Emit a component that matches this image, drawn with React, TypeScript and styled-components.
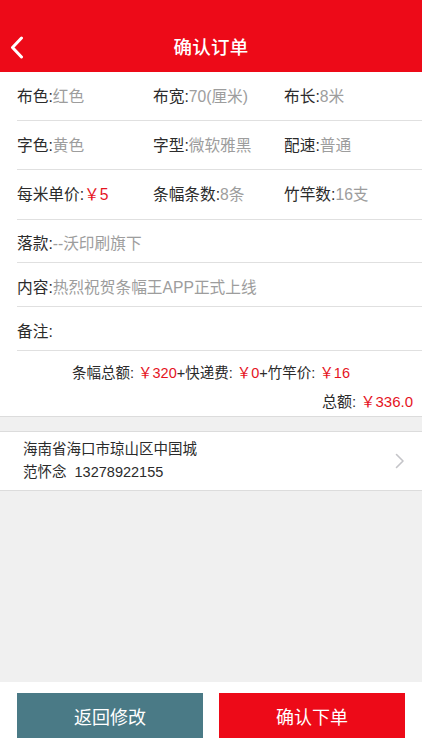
import React from "react";
import styled, { createGlobalStyle } from "styled-components";

const FONT = `"Liberation Sans", "Noto Sans CJK SC", "Noto Sans", sans-serif`;

const GlobalStyle = createGlobalStyle`
  html, body {
    margin: 0;
    padding: 0;
    background: #f0f0f0;
  }
  body {
    font-family: ${FONT};
    -webkit-font-smoothing: antialiased;
  }
`;

const RED = "#ed0a18";
const PRICE_RED = "#e5141e";

const SPEC_ROWS: { label: string; value: string; price?: boolean }[][] = [
  [
    { label: "布色", value: "红色" },
    { label: "布宽", value: "70(厘米)" },
    { label: "布长", value: "8米" },
  ],
  [
    { label: "字色", value: "黄色" },
    { label: "字型", value: "微软雅黑" },
    { label: "配速", value: "普通" },
  ],
  [
    { label: "每米单价", value: "￥5", price: true },
    { label: "条幅条数", value: "8条" },
    { label: "竹竿数", value: "16支" },
  ],
];

const LINE_ROWS = [
  { label: "落款", value: "--沃印刷旗下", height: 43 },
  { label: "内容", value: "热烈祝贺条幅王APP正式上线", height: 44 },
  { label: "备注", value: "", height: 44 },
];

export default function App() {
  return (
    <>
      <GlobalStyle />
      <Page>
        <Header>
          <BackButton aria-label="返回">
            <svg width="14" height="23" viewBox="0 0 14 23">
              <path
                d="M11.5 2 L2.5 11.5 L11.5 21"
                fill="none"
                stroke="#fff"
                strokeWidth="3"
                strokeLinecap="round"
                strokeLinejoin="round"
              />
            </svg>
          </BackButton>
          <Title>确认订单</Title>
        </Header>

        <InfoSection>
          {SPEC_ROWS.map((row, idx) => (
            <SpecRow key={idx} $height={idx === 2 ? 50 : 49}>
              {row.map((item) => (
                <Field key={item.label}>
                  {item.label}:<Value $price={item.price}>{item.value}</Value>
                </Field>
              ))}
            </SpecRow>
          ))}
          {LINE_ROWS.map((row) => (
            <LineRow key={row.label} $height={row.height}>
              <Field>
                {row.label}:<Value>{row.value}</Value>
              </Field>
            </LineRow>
          ))}
          <Summary>
            <SummaryLine>
              条幅总额: <Price>￥320</Price>+快递费: <Price>￥0</Price>+竹竿价:{" "}
              <Price>￥16</Price>
            </SummaryLine>
            <TotalLine>
              总额: <Price>￥336.0</Price>
            </TotalLine>
          </Summary>
        </InfoSection>

        <AddressCard>
          <AddressText>
            <div>海南省海口市琼山区中国城</div>
            <div>范怀念&nbsp;&nbsp;13278922155</div>
          </AddressText>
          <svg width="10" height="16" viewBox="0 0 10 16">
            <path
              d="M1.5 1.5 L8 8 L1.5 14.5"
              fill="none"
              stroke="#c4c4c8"
              strokeWidth="1.6"
              strokeLinecap="round"
              strokeLinejoin="round"
            />
          </svg>
        </AddressCard>

        <Spacer />

        <BottomBar>
          <ActionButton $variant="secondary">返回修改</ActionButton>
          <ActionButton $variant="primary">确认下单</ActionButton>
        </BottomBar>
      </Page>
    </>
  );
}

const Page = styled.div`
  height: 750px;
  display: flex;
  flex-direction: column;
  background: #f0f0f0;
  overflow: hidden;
`;

const Header = styled.header`
  position: relative;
  height: 72px;
  padding-top: 20px;
  box-sizing: border-box;
  background: ${RED};
  display: flex;
  align-items: center;
  justify-content: center;
  flex-shrink: 0;
`;

const BackButton = styled.button`
  position: absolute;
  left: 10px;
  top: 36px;
  padding: 0;
  border: none;
  background: transparent;
  display: flex;
`;

const Title = styled.h1`
  margin: 0;
  color: #fff;
  font-size: 18.5px;
  font-weight: 500;
  letter-spacing: 0.3px;
`;

const InfoSection = styled.section`
  background: #fff;
  padding-left: 17px;
  border-bottom: 1px solid #dcdcdc;
  flex-shrink: 0;
`;

const SpecRow = styled.div<{ $height: number }>`
  height: ${(p) => p.$height}px;
  box-sizing: border-box;
  display: grid;
  grid-template-columns: 136px 131px 1fr;
  align-items: center;
  border-bottom: 1px solid #e0e0e0;
  padding-bottom: 2px;
`;

const LineRow = styled.div<{ $height: number }>`
  height: ${(p) => p.$height}px;
  box-sizing: border-box;
  display: flex;
  align-items: center;
  border-bottom: 1px solid #e0e0e0;
  padding-top: 3px;
`;

const Field = styled.div`
  font-size: 15.7px;
  color: #2b2b2b;
  white-space: nowrap;
`;

const Value = styled.span<{ $price?: boolean }>`
  color: ${(p) => (p.$price ? PRICE_RED : "#9d9d9d")};
`;

const Price = styled.span`
  color: ${PRICE_RED};
`;

const Summary = styled.div`
  height: 65px;
  box-sizing: border-box;
  padding: 12px 9px 0 0;
  display: flex;
  flex-direction: column;
  font-size: 14.5px;
  color: #2b2b2b;
`;

const SummaryLine = styled.div`
  text-align: center;
  margin-left: -17px;
  margin-right: -9px;
  line-height: 20px;
`;

const TotalLine = styled.div`
  text-align: right;
  margin-top: 9px;
  font-size: 15px;
  line-height: 20px;
`;

const AddressCard = styled.div`
  margin-top: 14px;
  height: 60px;
  box-sizing: border-box;
  background: #fff;
  border-top: 1px solid #dcdcdc;
  border-bottom: 1px solid #dcdcdc;
  padding: 0 17px 0 23px;
  display: flex;
  align-items: center;
  justify-content: space-between;
  flex-shrink: 0;
`;

const AddressText = styled.div`
  font-size: 14.5px;
  line-height: 23px;
  color: #2b2b2b;
`;

const Spacer = styled.div`
  flex: 1;
`;

const BottomBar = styled.footer`
  height: 68px;
  box-sizing: border-box;
  background: #fff;
  padding: 11px 17px 0 17px;
  display: grid;
  grid-template-columns: 186px 186px;
  justify-content: space-between;
  align-items: start;
  flex-shrink: 0;
`;

const ActionButton = styled.button<{ $variant: "primary" | "secondary" }>`
  height: 45px;
  border: none;
  border-radius: 0;
  background: ${(p) => (p.$variant === "primary" ? RED : "#4a7a86")};
  color: #fff;
  font-family: ${FONT};
  font-size: 18px;
  cursor: pointer;
`;
